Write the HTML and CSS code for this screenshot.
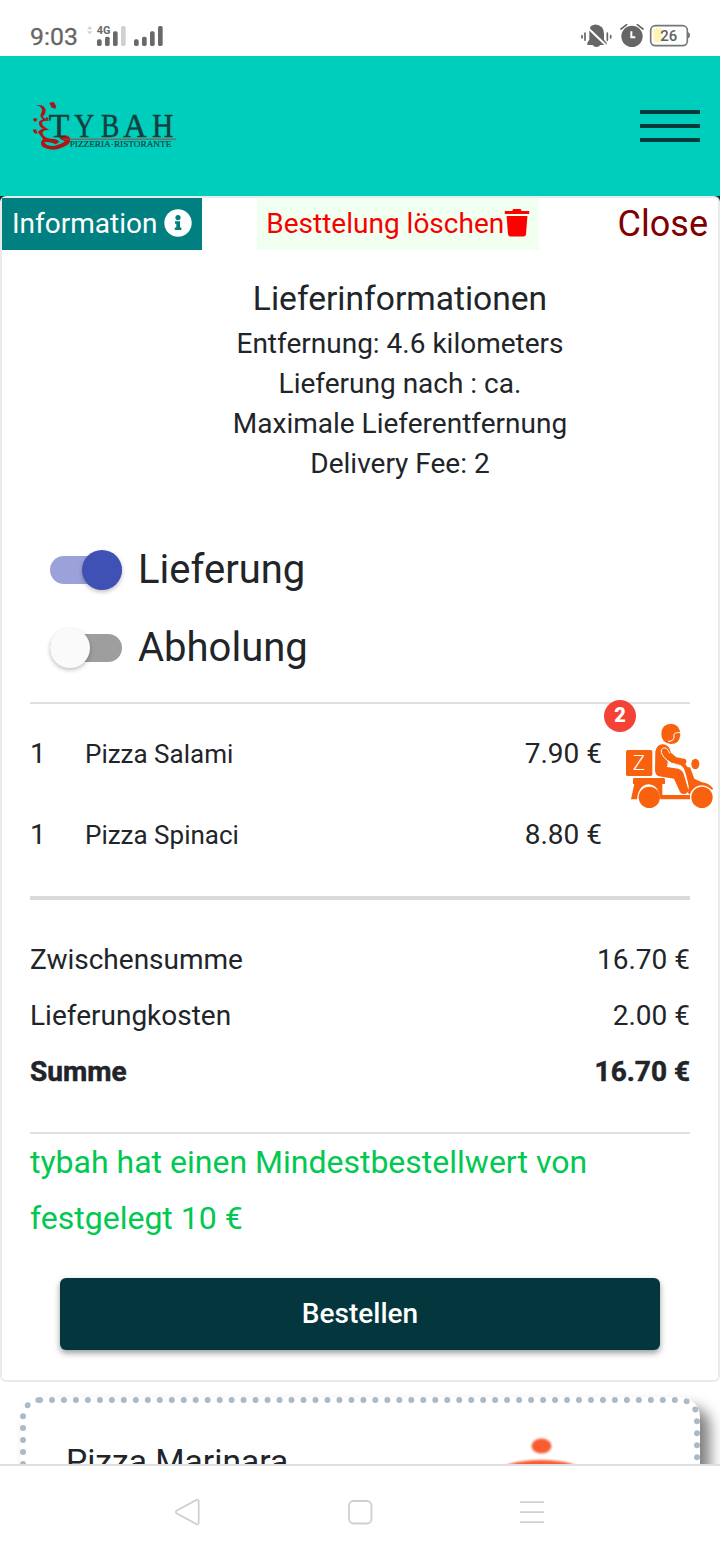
FILE: index.html
```html
<!DOCTYPE html>
<html lang="de">
<head>
<meta charset="utf-8">
<title>Tybah Pizzeria</title>
<link rel="stylesheet" href="styles.css">
</head>
<body>
<div class="screen">
  <div class="status">
    <div class="status-left">
      <span class="clock">9:03</span>
      <svg class="signal" width="78" height="24" viewBox="0 0 234 72">
        <path d="M3 22l8-10 8 10zM3 28h16l-8 9z" fill="#d0d0d0"/>
        <text x="32" y="36" class="net" textLength="41" lengthAdjust="spacingAndGlyphs">4G</text>
        <g fill="#696969"><rect x="33" y="52" width="14" height="20" rx="5"/><rect x="57" y="44" width="14" height="28" rx="5"/><rect x="81" y="28" width="14" height="44" rx="5"/>
        <rect x="144" y="52" width="14" height="20" rx="5"/><rect x="168" y="44" width="14" height="28" rx="5"/><rect x="192" y="28" width="14" height="44" rx="5"/><rect x="216" y="12" width="14" height="60" rx="5"/></g>
        <rect x="105" y="12" width="14" height="60" rx="5" fill="#d0d0d0"/>
      </svg>
    </div>
    <svg class="indicators" width="110" height="26" viewBox="60 66 330 78">
      <g fill="#666"><path d="M92 79Q108 66 126 82Q132 90 132 101V119L140 128V135H121Q117 141 109 141Q101 141 98 135H82V128L88 119V90z"/>
      <circle cx="216" cy="109" r="32"/></g>
      <path d="M80 80L138 136" stroke="#fff" stroke-width="6"/>
      <g fill="none" stroke="#666" stroke-width="5" stroke-linecap="round"><path d="M66 107v7M75 99v22M142 99v22M152 107v7M183 87l17-13M232 74l17 13"/></g>
      <path d="M214 94v18h12" fill="none" stroke="#fff" stroke-width="6"/>
      <rect x="281" y="84" width="26" height="43" rx="9" fill="#fff3b5"/>
      <rect x="272" y="77" width="110" height="60" rx="14" fill="none" stroke="#777" stroke-width="5"/>
      <path d="M383 97q7 0 7 9t-7 9z" fill="#777"/>
      <text x="301" y="123" class="battery" textLength="51" lengthAdjust="spacingAndGlyphs">26</text>
    </svg>
  </div>

  <header class="header">
    <svg width="150" height="54" viewBox="30 30 450 162">
      <g fill="#b01414" transform="translate(0 3)"><path d="M48 45Q77 43 77 62Q77 71 68 80Q76 88 88 93Q69 91 66 98Q65 108 88 119Q70 119 67 128Q70 143 91 146Q111 145 118 155L108 163Q82 153 73 157Q76 168 101 168Q126 162 135 154Q115 146 117 139Q145 130 151 147Q151 164 130 171Q99 187 69 172Q56 161 69 147L54 127Q58 118 70 117Q54 108 57 95Q64 89 69 88Q56 80 65 67Q70 50 48 45z"/>
      <path d="M88 38l13-2 7 11-1 9-12-3zM39 87l7-4 6 5-4 7-7-2zM38 119l10-1 5 13-10-1zM79 82l7 2-2 6-8-2z"/></g>
      <g class="logo-name"><text x="86" y="144" textLength="62" lengthAdjust="spacingAndGlyphs">T</text><text x="163" y="144" textLength="60" lengthAdjust="spacingAndGlyphs">Y</text><text x="243" y="144" textLength="55" lengthAdjust="spacingAndGlyphs">B</text><text x="310" y="144" textLength="70" lengthAdjust="spacingAndGlyphs">A</text><text x="396" y="144" textLength="64" lengthAdjust="spacingAndGlyphs">H</text></g>
      <path d="M130 150.500H468" stroke="#9a4840" stroke-width="3"/>
      <text x="149" y="175" class="logo-sub" textLength="305" lengthAdjust="spacingAndGlyphs">PIZZERIA·RISTORANTE</text>
    </svg>
    <div class="burger"><i></i><i></i><i></i></div>
  </header>

  <main class="page">
    <div class="card-back">
    <section class="card">
      <div class="actions">
        <div class="info">Information
          <svg width="28" height="28" viewBox="0 0 28 28"><circle cx="14" cy="14" r="13.7" fill="#fff"/><circle cx="14" cy="8.6" r="2.6" fill="#008080"/><path d="M11 12.2h5v6.2h1.4v2.5h-6.600v-2.500h1.500v-3.700H11z" fill="#008080"/></svg>
        </div>
        <div class="delete">Besttelung löschen<svg width="26" height="29" viewBox="0 0 26 29"><path d="M.8 3h7.4l1-2h7.4l1 2h7.6v3H.8zM2.600 8h20.800L22 26.300q-.2 2.200-2.500 2.200h-13Q4.300 28.500 4 26.300z" fill="red"/></svg></div>
        <div class="close">Close</div>
      </div>
      <div class="delivery">
        <h2>Lieferinformationen</h2>
        <p>Entfernung: 4.6 kilometers</p>
        <p>Lieferung nach : ca.</p>
        <p>Maximale Lieferentfernung</p>
        <p>Delivery Fee: 2</p>
      </div>
      <div class="switches">
        <div class="switch on"><span class="track"><span class="thumb"></span></span><span class="label">Lieferung</span></div>
        <div class="switch"><span class="track"><span class="thumb"></span></span><span class="label">Abholung</span></div>
      </div>
      <div class="items">
        <div class="item"><span class="qty">1</span><span class="name">Pizza Salami</span><span>7.90 €</span></div>
        <div class="item"><span class="qty">1</span><span class="name">Pizza Spinaci</span><span>8.80 €</span></div>
      </div>
      <div class="totals">
        <div class="row"><span>Zwischensumme</span><span>16.70 €</span></div>
        <div class="row"><span>Lieferungkosten</span><span>2.00 €</span></div>
        <div class="row sum"><span>Summe</span><span>16.70 €</span></div>
      </div>
      <p class="minimum">tybah hat einen Mindestbestellwert von festgelegt 10 €</p>
      <button class="order">Bestellen</button>
    </section>
    </div>
    <article class="product">
      <span>Pizza Marinara</span>
      <svg width="70" height="50" viewBox="0 0 70 50"><ellipse cx="34.500" cy="12" rx="10" ry="7.500" fill="#fa5c32"/><ellipse cx="34" cy="38" rx="42" ry="12" fill="#fa5c32"/></svg>
    </article>
  </main>

  <div class="cart">
    <svg width="130" height="130" viewBox="0 0 390 390">
      <g fill="#f8620f">
        <rect x="108" y="180" width="79" height="78" rx="5"/>
        <path d="M131 264H221Q225 264 225 269V282H217V315H300V328H211Q206 285 177 283Q146 284 141 328H123L133 282H129V266z"/>
        <circle cx="178" cy="322" r="32"/><circle cx="336" cy="322" r="32"/>
        <path d="M214 132Q215 101 244 101Q271 104 271 134Q268 163 242 162Q214 158 214 132z"/>
        <path d="M196 184Q201 162 220 163Q237 164 243 188L259 202L286 207Q293 214 286 222L293 232L300 232L313 266L336 277Q360 280 370 297L366 299Q328 270 304 304L299 314L294 309L296 290Q290 255 281 234L275 228L244 220L234 211L231 231L265 236Q278 240 282 255L295 299Q294 313 279 312Q270 310 267 299L252 266L207 259Q195 255 195 240z"/>
        <ellipse cx="316" cy="222" rx="12" ry="16"/>
      </g>
      <g fill="none" stroke="#fff" stroke-width="3"><path d="M234 154Q255 155 252 133Q254 127 271 128M239 190Q232 171 220 174Q211 178 214 188Q222 208 244 219L273 227"/></g>
      <text x="128" y="240" class="box-letter" textLength="37" lengthAdjust="spacingAndGlyphs">Z</text>
    </svg>
    <span class="badge">2</span>
  </div>

  <nav class="nav">
    <svg width="28" height="30" viewBox="0 0 28 30"><path d="M3.300 13.200L22 3.100q2.700-1 2.700 1.600v20.800q0 2.500-2.700 1.400L3.300 16.800q-3-1.800 0-3.600z"/></svg>
    <svg width="28" height="30" viewBox="0 0 28 30"><rect x="3" y="4" width="22.500" height="22.500" rx="4.500"/></svg>
    <svg width="28" height="30" viewBox="0 0 28 30"><path d="M2 5.200h24M2 15.200h24M2 25.200h24"/></svg>
  </nav>
</div>
</body>
</html>
```
FILE: styles.css
```css
* { box-sizing: border-box; }
body { margin: 0; background: #fff; color: #212529; font-family: Roboto, "Liberation Sans", sans-serif; }
h2, p { margin: 0; font-weight: 400; }
.screen { position: relative; display: flex; flex-direction: column; width: 720px; height: 1560px; overflow: hidden; }

.status { flex: none; display: flex; justify-content: space-between; align-items: flex-end; height: 56px; padding: 0 30px 7px; color: #666; }
.status-left { display: flex; align-items: flex-end; gap: 8px; }
.clock { font-size: 24.800px; line-height: 24px; -webkit-text-stroke: .3px #666; }
.signal { margin-bottom: 3px; }
.indicators { margin-bottom: 1px; }
.net { font: bold 34px Roboto, sans-serif; fill: #696969; }
.battery { font: 500 43px Roboto, sans-serif; fill: #606060; }

.header { flex: none; display: flex; justify-content: space-between; align-items: center; height: 140px; padding: 0 20px 0 30px; background: #00cebd; }
.logo-name { font: 102px "Liberation Serif", serif; fill: #173d3c; stroke: #173d3c; stroke-width: 1.500px; }
.logo-sub { font: 26px "Liberation Serif", serif; fill: #173d3c; stroke: #173d3c; stroke-width: .5px; }
.burger { display: flex; flex-direction: column; gap: 10px; width: 60px; }
.burger i { height: 4px; background: #033a3b; }

.page { flex: none; height: 1268px; overflow: hidden; }
.card-back { background: linear-gradient(#03363a 5px, #fff 5px); }
.card { height: 1186px; border: 2px solid #e9eaea; border-radius: 6px; background: #fff; }
.actions { display: flex; justify-content: space-between; height: 52px; font-size: 28px; line-height: 51px; }
.info { display: flex; align-items: center; gap: 7px; width: 200px; padding: 0 0 2px 10px; background: #008080; color: #fff; }
.info svg { margin-bottom: 1px; }
.delete { display: flex; align-items: center; width: 282px; margin-left: -24px; padding: 0 0 2px 9.500px; background: #f0fff0; color: #f80000; }
.delete svg { margin: 0 0 1px -.5px; }
.close { padding: 1px 10px 0 0; color: #800000; font-size: 36px; }

.delivery { margin-top: 28px; padding-left: 80px; font-size: 28px; line-height: 40px; text-align: center; }
.delivery h2 { height: 46px; font-size: 33.600px; line-height: 42px; }
.switches { display: flex; flex-direction: column; gap: 18px; margin: 56px 28px 0; padding: 0 20px 24px; border-bottom: 2px solid #dfdfdf; }
.switch { display: flex; align-items: center; gap: 16px; height: 60px; font-size: 40px; }
.label { padding-bottom: 2px; }
.track { display: flex; align-items: center; width: 72px; height: 28px; border-radius: 14px; background: #9e9e9e; }
.thumb { width: 40px; height: 40px; border-radius: 50%; background: #fafafa; box-shadow: 0 2px 4px rgba(0, 0, 0, .25); }
.on .track { justify-content: flex-end; background: #9aa2d9; }
.on .thumb { background: #3f51b5; }

.items { margin: 0 28px; padding: 9px 0 21px; border-bottom: 4px solid #dadada; }
.item { display: flex; align-items: center; height: 81px; padding-right: 88px; font-size: 28px; }
.qty { width: 55px; }
.name { flex: 1; font-size: 26px; }
.totals { margin: 0 28px; padding: 32px 0 32px; border-bottom: 2px solid #dfdfdf; }
.row { display: flex; justify-content: space-between; font-size: 28px; line-height: 56px; }
.sum { font-weight: 700; -webkit-text-stroke: .5px #212529; }
.minimum { margin: 0 28px; color: #00c851; font-size: 32px; line-height: 56px; }
.order { display: block; width: 600px; height: 72px; margin: 32px 0 0 58px; padding: 0 0 2px; border: 0; border-radius: 6px; background: #03363d; color: #fff; font: 500 28px Roboto, sans-serif; box-shadow: 0 3px 6px rgba(0, 0, 0, .4); }

.product { display: flex; justify-content: space-between; width: 680px; height: 300px; margin: 15px 20px 0; padding: 39px 117px 0 40px; border: 6px dotted #aabbc5; border-radius: 20px; background: #fff; box-shadow: 10px 10px 14px rgba(0, 0, 0, .5); font-size: 33.600px; line-height: 40px; }
.product svg { margin-top: -8px; overflow: visible; filter: blur(1px); }

.cart { position: absolute; left: 590px; top: 690px; width: 130px; height: 130px; }
.badge { position: absolute; left: 14px; top: 10px; width: 32px; height: 32px; border-radius: 50%; background: #f44336; color: #fff; font-size: 20px; font-weight: 900; line-height: 30px; text-align: center; }
.box-letter { font: 300 58px Roboto, sans-serif; fill: #fff; }

.nav { flex: none; display: flex; justify-content: center; gap: 144px; height: 96px; padding-top: 31px; border-top: 2px solid #dfdfdf; background: #fff; }
.nav svg { position: relative; left: -.5px; fill: none; stroke: #d0d0d0; stroke-width: 1.800; }
```
